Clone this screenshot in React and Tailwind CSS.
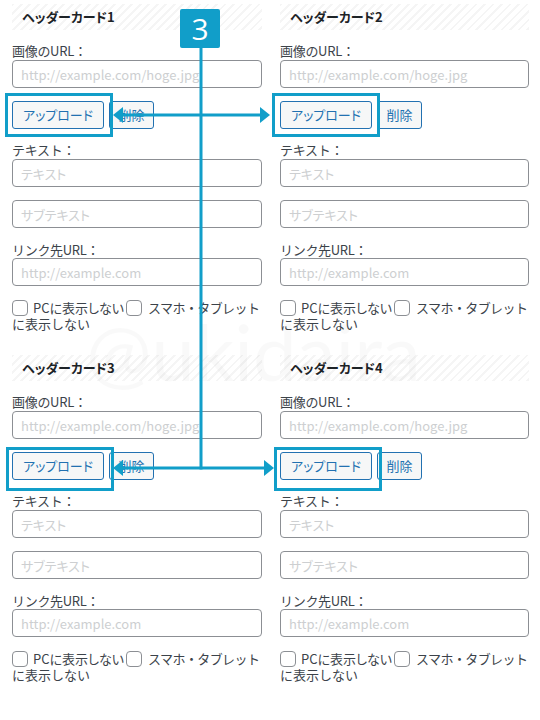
import React from "react";

const font = {
  fontFamily: '"Noto Sans CJK JP", "Noto Sans", sans-serif',
};

function Input({ ph }) {
  return (
    <div className="h-[28px] w-full rounded-[4px] border border-[#8c8f94] bg-white flex items-center px-[8px] text-[13px] text-[#cdcfd1] leading-none [font-feature-settings:'palt']">
      {ph}
    </div>
  );
}

function Label({ children, mt }) {
  return (
    <div className={`${mt} text-[13px] leading-[16px] text-[#3c434a] tracking-[-0.3px]`}>{children}</div>
  );
}

function Checkbox() {
  return (
    <span className="inline-block w-[16px] h-[16px] rounded-[4px] border border-[#8c8f94] bg-white align-[-3px] mr-[5px]"></span>
  );
}

function Card({ n }) {
  return (
    <div className="flex flex-col pb-[19px]">
      <div className="mt-[4px] h-[26px] flex items-center pl-[10px] text-[13px] font-bold text-[#1d2327] [font-feature-settings:'palt'] bg-[repeating-linear-gradient(135deg,#f5f5f5_0px,#f5f5f5_2px,#ffffff_2px,#ffffff_6px)]">
        ヘッダーカード{n}
      </div>
      <Label mt="mt-[13px]">画像のURL：</Label>
      <div className="mt-[1px]">
        <Input ph="http://example.com/hoge.jpg" />
      </div>
      <div className="mt-[13px] flex gap-[5px] [font-feature-settings:'palt']">
        <div className="h-[28px] w-[92px] rounded-[3px] border border-[#2271b1] bg-[#f6f7f7] text-[#2271b1] text-[13px] flex items-center justify-center">
          アップロード
        </div>
        <div className="h-[28px] w-[45px] rounded-[3px] border border-[#2271b1] bg-[#f6f7f7] text-[#2271b1] text-[13px] flex items-center justify-center">
          削除
        </div>
      </div>
      <Label mt="mt-[13px]">テキスト：</Label>
      <div className="mt-[1px]">
        <Input ph="テキスト" />
      </div>
      <div className="mt-[13px]">
        <Input ph="サブテキスト" />
      </div>
      <Label mt="mt-[14px]">リンク先URL：</Label>
      <div className="mt-[0px]">
        <Input ph="http://example.com" />
      </div>
      <div className="mt-[14px] text-[13px] leading-[16px] text-[#3c434a]">
        <Checkbox />
        <span className="[font-feature-settings:'palt']">PCに表示しない</span>
        <span className="ml-[2px]"></span>
        <Checkbox />
        <span className="ml-[1px] tracking-[-0.6px]">スマホ・タブレット</span>
        <br />
        <span>に表示しない</span>
      </div>
    </div>
  );
}

export default function App() {
  const blue = "#119ec9";
  return (
    <div className="relative w-[540px] h-[720px] bg-white overflow-hidden" style={font}>
      <div className="grid grid-cols-[250px_249px] gap-x-[18px] pl-[12px]">
        <Card n={1} />
        <Card n={2} />
        <Card n={3} />
        <Card n={4} />
      </div>

      {/* watermark */}
      <div
        className="absolute left-[86px] top-[312px] text-[78px] leading-none text-black/[0.025] pointer-events-none select-none"
        style={{ fontFamily: 'Lato, "Open Sans", sans-serif' }}
      >
        @ukidaira
      </div>

      {/* annotations */}
      <svg
        className="absolute left-0 top-0 pointer-events-none"
        width="540"
        height="720"
        viewBox="0 0 540 720"
      >
        <g fill="none" stroke={blue} strokeWidth="3">
          <rect x="6.5" y="94.5" width="105" height="41" />
          <rect x="273.5" y="94.5" width="105" height="41" />
          <rect x="7.5" y="448.5" width="105" height="41" />
          <rect x="275.5" y="448.5" width="105" height="41" />
          <line x1="201" y1="46" x2="201" y2="469.5" />
          <line x1="121" y1="115" x2="262" y2="115" />
          <line x1="121" y1="468" x2="266" y2="468" />
        </g>
        <g fill={blue}>
          <polygon points="113,115 123,107 123,123" />
          <polygon points="270,115 260,107 260,123" />
          <polygon points="113,468 123,460 123,476" />
          <polygon points="274,468 264,460 264,476" />
        </g>
      </svg>
      <div
        className="absolute left-[180px] top-[9px] w-[40px] h-[39px] rounded-[2px] bg-[#119ec9] text-white text-[30px] leading-none flex items-center justify-center"
        style={{ fontFamily: '"Open Sans", "Noto Sans", sans-serif' }}
      >
        3
      </div>
    </div>
  );
}
